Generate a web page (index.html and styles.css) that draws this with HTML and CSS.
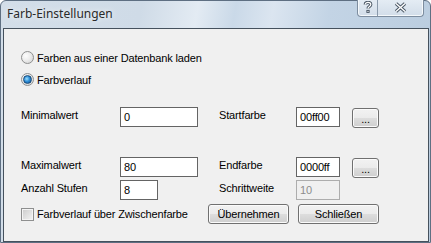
FILE: index.html
```html
<!DOCTYPE html>
<html>

<head>
    <meta charset="utf-8" />
    <title>Farb-Einstellungen</title>
    <link rel="stylesheet" href="styles.css">
</head>

<body>
    <div class="window">
        <!-- Titelleiste -->
        <div class="titlebar">
            <span class="title">Farb-Einstellungen</span>
            <div class="caption">
                <span class="cap_btn cap_help">
                    <svg width="10" height="12" viewBox="0 0 10 12">
                        <path d="M2.2 3.6 C2.2 0.6 7.8 0.6 7.8 3.6 C7.8 5.6 5 5.4 5 7.6" fill="none" stroke="#4b5866" stroke-width="3.2" />
                        <rect x="3.4" y="8.9" width="3.2" height="3" fill="#4b5866" />
                        <path d="M2.2 3.6 C2.2 0.6 7.8 0.6 7.8 3.6 C7.8 5.6 5 5.4 5 7.6" fill="none" stroke="#fff" stroke-width="1.2" />
                        <rect x="4.4" y="9.9" width="1.2" height="1" fill="#fff" />
                    </svg>
                </span>
                <span class="cap_btn cap_close">
                    <svg width="13" height="11" viewBox="0 0 13 11">
                        <path d="M2 1.5 L11 9.5 M11 1.5 L2 9.5" stroke="#4b5866" stroke-width="3.4" />
                        <path d="M2 1.5 L11 9.5 M11 1.5 L2 9.5" stroke="#fff" stroke-width="1.4" />
                    </svg>
                </span>
            </div>
        </div>

        <!-- Inhalt -->
        <div class="client">
            <label class="option">
                <span class="radio"></span>Farben aus einer Datenbank laden
            </label>
            <label class="option option_second">
                <span class="radio radio_checked"></span>Farbverlauf
            </label>

            <div class="row row_min">
                <span class="lbl">Minimalwert</span>
                <span class="field field_wide">0</span>
                <span class="lbl">Startfarbe</span>
                <span class="field field_color">00ff00</span>
                <button class="btn btn_dots">...</button>
            </div>

            <div class="row row_max">
                <span class="lbl">Maximalwert</span>
                <span class="field field_wide">80</span>
                <span class="lbl">Endfarbe</span>
                <span class="field field_color">0000ff</span>
                <button class="btn btn_dots">...</button>
            </div>

            <div class="row row_steps">
                <span class="lbl">Anzahl Stufen</span>
                <span class="field field_small">8</span>
                <span class="lbl">Schrittweite</span>
                <span class="field field_color field_disabled">10</span>
            </div>

            <div class="row_bottom">
                <label class="option">
                    <span class="check"></span>Farbverlauf über Zwischenfarbe
                </label>
                <button class="btn btn_wide">Übernehmen</button>
                <button class="btn btn_wide">Schließen</button>
            </div>
        </div>
    </div>
</body>

</html>
```

FILE: styles.css
```css
* {
    margin: 0;
    padding: 0;
    box-sizing: border-box;
}

body {
    background: #fff;
    font-family: "Liberation Sans", Arial, sans-serif;
    font-size: 11px;
    letter-spacing: -0.15px;
    color: #000;
}

.window {
    width: 431px;
    height: 243px;
    border: 1px solid #5e6f82;
    border-radius: 6px 6px 0 0;
    padding: 0 1px 0 2px;
    display: flex;
    flex-direction: column;
    background: linear-gradient(100deg, #d3dee9 0%, #cfdbe7 30%, #e3ebf3 42%, #cad9e8 50%, #dbe5f0 58%, #c3d4e5 70%, #b8cbde 100%);
}

/* Titelleiste */
.titlebar {
    height: 27px;
    display: flex;
    align-items: flex-start;
    padding-left: 4px;
}

.title {
    font-family: "Noto Sans", sans-serif;
    font-size: 12px;
    letter-spacing: 0;
    line-height: 16px;
    padding-top: 5px;
    color: #2a2a2a;
    text-shadow: 0 0 6px #fff;
}

.caption {
    margin-left: auto;
    margin-right: 5px;
    margin-top: -1px;
    display: flex;
    height: 17px;
    border: 1px solid #7d8d9f;
    border-top: none;
    border-radius: 0 0 4px 4px;
    background: linear-gradient(#e4ecf4, #d2dde9);
    box-shadow: inset 0 -1px 0 #f4f8fb, inset 1px 0 0 #f4f8fb, inset -1px 0 0 #f4f8fb;
}

.cap_btn {
    display: flex;
    align-items: center;
    justify-content: center;
    padding-bottom: 2px;
}

.cap_help {
    width: 20px;
    border-right: 1px solid #8a9aab;
}

.cap_close {
    width: 45px;
}

/* Inhalt */
.client {
    flex: 1;
    background: #f0f0f0;
    border: 1px solid #45515d;
    padding: 22px 0 0 17px;
}

.option {
    display: flex;
    align-items: center;
    height: 13px;
    white-space: nowrap;
}

.option_second {
    margin-top: 9px;
}

.radio {
    width: 13px;
    height: 13px;
    margin-right: 3px;
    border-radius: 50%;
    border: 1px solid #8e8f8f;
    background: radial-gradient(circle at 35% 35%, #fdfdfd 0%, #ececec 45%, #cfcfcf 100%);
    display: flex;
    align-items: center;
    justify-content: center;
}

.radio_checked::after {
    content: "";
    width: 7px;
    height: 7px;
    border-radius: 50%;
    border: 1px solid #1a4b78;
    background: radial-gradient(circle at 40% 40%, #9fe1ff 0%, #2f8fd8 45%, #0b4c8c 100%);
}

.check {
    width: 13px;
    height: 13px;
    margin-right: 3px;
    border: 1px solid #8e8f8f;
    box-shadow: inset 0 0 0 1px #f4f4f4;
    background: linear-gradient(135deg, #cbcbcb 0%, #e4e4e4 60%, #f3f3f3 100%);
}

.row {
    display: grid;
    grid-template-columns: 99px 99px 77px 56px 27px;
    height: 20px;
}

.row_min {
    margin-top: 21px;
}

.row_max {
    margin-top: 30px;
}

.row_steps {
    margin-top: 3px;
}

.lbl {
    padding-top: 2px;
    line-height: 13px;
    white-space: nowrap;
}

.field {
    height: 20px;
    border: 1px solid #646464;
    background: #fff;
    padding-left: 3px;
    line-height: 18px;
}

.field_wide {
    width: 78px;
}

.field_small {
    width: 38px;
}

.field_color {
    width: 44px;
}

.field_disabled {
    border-color: #adadad;
    background: #f0f0f0;
    color: #8d8d8d;
}

.btn {
    font-family: "Liberation Sans", Arial, sans-serif;
    font-size: 11px;
    letter-spacing: -0.15px;
    color: #000;
    height: 20px;
    border: 1px solid #707070;
    border-radius: 3px;
    box-shadow: inset 0 0 0 1px #fbfbfb;
    background: linear-gradient(#f2f2f2 0%, #ebebeb 50%, #dddddd 50%, #cfcfcf 100%);
}

.btn_dots {
    width: 27px;
    margin-top: 1px;
    line-height: 20px;
}

.row_bottom {
    margin-top: 4px;
    display: grid;
    grid-template-columns: 187px 90px 81px;
    align-items: center;
}

.btn_wide {
    width: 81px;
}
```
